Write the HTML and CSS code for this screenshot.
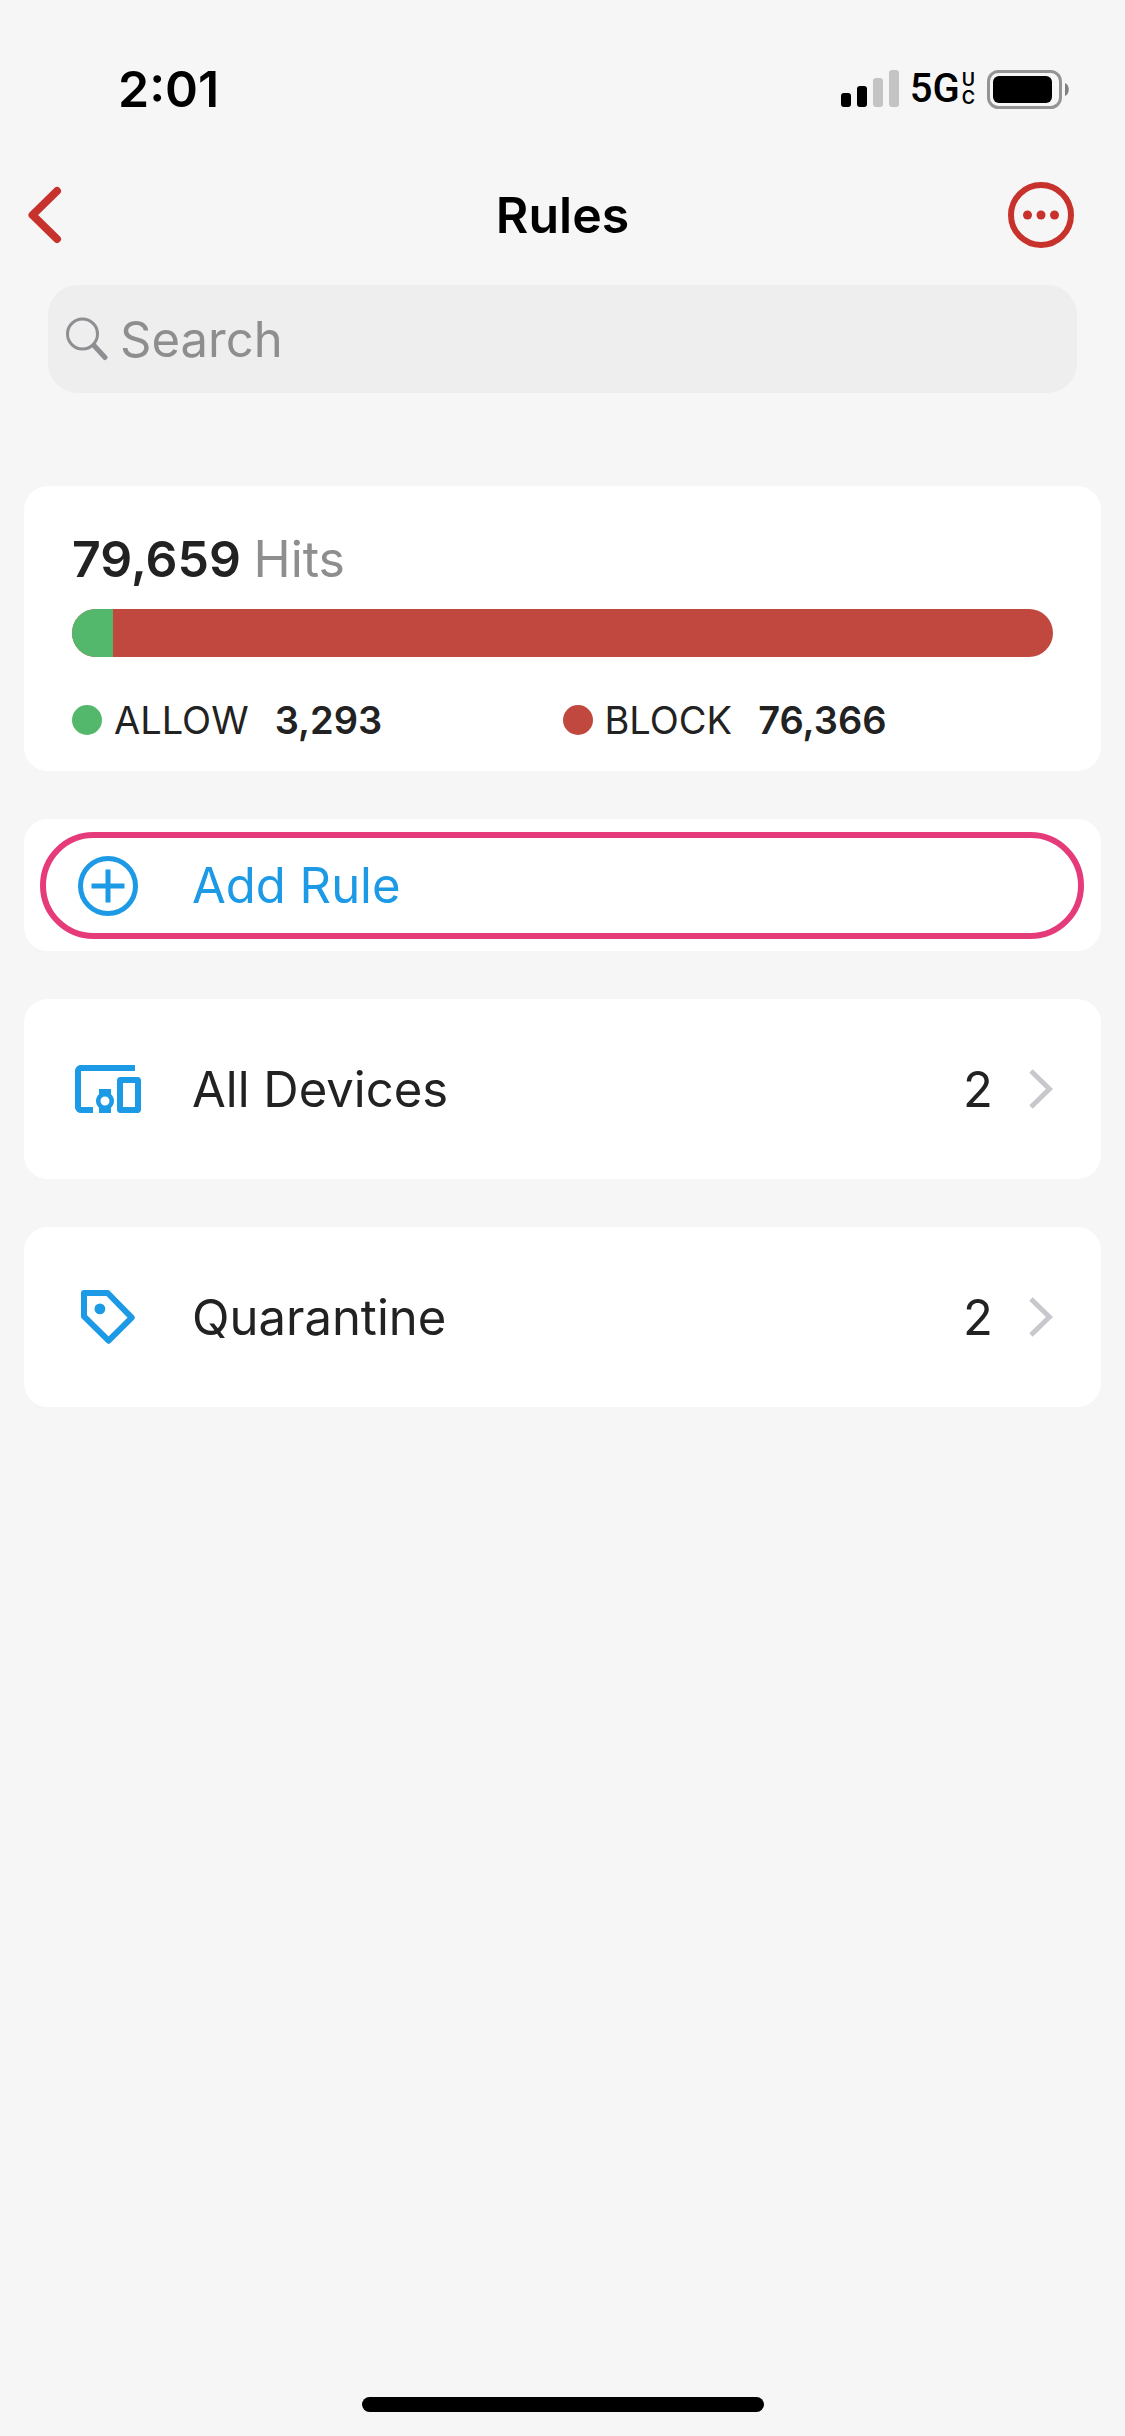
FILE: index.html
```html
<!DOCTYPE html>
<html lang="en">
<head>
  <meta charset="UTF-8">
  <meta name="viewport" content="width=device-width, initial-scale=1">
  <title>Rules</title>
  <link rel="stylesheet" href="styles.css">
</head>
<body>

<div class="status-bar">
  <span class="time">2:01</span>
  <div class="status-icons">
    <svg class="signal" viewBox="0 0 58 38" aria-hidden="true">
      <rect x="0" y="23" width="10" height="14" rx="3"/>
      <rect x="16" y="16" width="10" height="21" rx="3"/>
      <rect class="off" x="32" y="8" width="10" height="29" rx="3"/>
      <rect class="off" x="48" y="0" width="10" height="37" rx="3"/>
    </svg>
    <span class="network">5G</span>
    <span class="network-uc"><span>U</span><span>C</span></span>
    <svg class="battery" viewBox="0 0 82 39" aria-hidden="true">
      <rect class="shell" x="1.5" y="1.5" width="72" height="36" rx="10"/>
      <rect x="6" y="6" width="59" height="27" rx="6"/>
      <path class="nub" d="M78 13c5 2 5 11 0 13z"/>
    </svg>
  </div>
</div>

<header class="nav">
  <button class="back" aria-label="Back">
    <svg viewBox="0 0 34 58"><path d="M29 5L4.500 29L29 53"/></svg>
  </button>
  <h1>Rules</h1>
  <button class="more" aria-label="More">
    <svg viewBox="0 0 66 66">
      <circle class="ring" cx="33" cy="33" r="30"/>
      <circle cx="19.500" cy="33" r="4.500"/>
      <circle cx="33" cy="33" r="4.500"/>
      <circle cx="46.500" cy="33" r="4.500"/>
    </svg>
  </button>
</header>

<label class="search">
  <svg viewBox="0 0 42 44" aria-hidden="true">
    <circle cx="16.500" cy="17" r="15"/>
    <path d="M28 28.500L39 40.500"/>
  </svg>
  <input type="search" placeholder="Search" aria-label="Search">
</label>

<main>
  <section class="card summary">
    <h2>79,659 <span>Hits</span></h2>
    <div class="bar">
      <div class="bar-allow" style="width: 4.13%"></div>
    </div>
    <div class="legend">
      <div class="legend-item"><i class="dot allow"></i>ALLOW <strong>3,293</strong></div>
      <div class="legend-item"><i class="dot block"></i>BLOCK <strong>76,366</strong></div>
    </div>
  </section>

  <section class="card add-card">
    <button class="add-rule">
      <svg viewBox="0 0 60 60" aria-hidden="true">
        <circle cx="30" cy="30" r="27.500"/>
        <path d="M30 13.500v33M13.500 30h33"/>
      </svg>
      Add Rule
    </button>
  </section>

  <a class="card row" href="#devices">
    <svg class="row-icon" viewBox="0 0 24 24" aria-hidden="true">
      <path d="M3 6h18V4H3c-1.100 0-2 .9-2 2v12c0 1.100.9 2 2 2h4v-2H3V6zm10 6H9v1.780c-.61.55-1 1.330-1 2.220s.39 1.670 1 2.220V20h4v-1.780c.61-.55 1-1.340 1-2.220s-.39-1.670-1-2.220V12zm-2 5.500c-.83 0-1.500-.67-1.500-1.500s.67-1.500 1.500-1.500 1.500.67 1.500 1.500-.67 1.500-1.500 1.500zM22 8h-6c-.5 0-1 .5-1 1v10c0 .5.5 1 1 1h6c.5 0 1-.5 1-1V9c0-.5-.5-1-1-1zm-1 10h-4v-8h4v8z"/>
    </svg>
    <span class="row-label">All Devices</span>
    <span class="row-count">2</span>
    <svg class="chevron" viewBox="0 0 24 40" aria-hidden="true"><path d="M2 2L20.500 20L2 38"/></svg>
  </a>

  <a class="card row" href="#quarantine">
    <svg class="row-icon" viewBox="0 0 24 24" aria-hidden="true">
      <path class="tag" d="M4 4h7.900L19.900 12.200L12.200 19.900L4 11.800z"/>
      <circle cx="9.300" cy="9.300" r="1.800"/>
    </svg>
    <span class="row-label">Quarantine</span>
    <span class="row-count">2</span>
    <svg class="chevron" viewBox="0 0 24 40" aria-hidden="true"><path d="M2 2L20.500 20L2 38"/></svg>
  </a>
</main>

<div class="home-indicator"></div>

</body>
</html>
```

FILE: styles.css
```css
* {
  box-sizing: border-box;
}
body {
  margin: 0;
  min-height: 100vh;
  display: flex;
  flex-direction: column;
  font-family: Inter, "Liberation Sans", sans-serif;
  font-size: 49px;
  line-height: 60px;
  color: #222;
  background: #f6f6f6;
}
h1, h2 {
  margin: 0;
  font-size: 50px;
  font-weight: 600;
}
button {
  padding: 0;
  border: none;
  background: none;
  font: inherit;
  cursor: pointer;
}
svg {
  display: block;
  flex: none;
}

/* status bar */
.status-bar {
  display: flex;
  justify-content: space-between;
  align-items: center;
  padding: 59px 56px 0 118px;
  color: #000;
}
.time {
  font-size: 50px;
  font-weight: 600;
}
.status-icons {
  display: flex;
  align-items: center;
}
.signal {
  width: 58px;
  height: 38px;
}
.signal .off {
  fill: #c4c4c4;
}
.network {
  margin-left: 11px;
  font-family: Roboto, sans-serif;
  font-size: 40px;
  font-weight: 500;
}
.network-uc {
  display: flex;
  flex-direction: column;
  margin: 0 12px 0 2px;
  font-size: 18px;
  line-height: 18px;
  font-weight: 600;
}
.battery {
  width: 82px;
  height: 39px;
}
.battery .shell {
  fill: none;
  stroke: #949494;
  stroke-width: 3;
}
.battery .nub {
  fill: #808080;
}

/* navigation */
.nav {
  display: grid;
  grid-template-columns: 1fr auto 1fr;
  column-gap: 20px;
  align-items: center;
  height: 132px;
  padding: 0 28px;
  margin-top: 30px;
}
.nav h1 {
  color: #000;
}
.back {
  justify-self: start;
}
.more {
  justify-self: end;
  margin-right: 23px;
}
.back svg {
  width: 34px;
  height: 58px;
  fill: none;
  stroke: #c8322d;
  stroke-width: 8;
  stroke-linecap: round;
  stroke-linejoin: round;
}
.more svg {
  width: 66px;
  height: 66px;
  fill: #c8322d;
}
.more .ring {
  fill: none;
  stroke: #c8322d;
  stroke-width: 6;
}

/* search */
.search {
  display: flex;
  align-items: center;
  gap: 12px;
  height: 108px;
  margin: 4px 48px 0;
  padding: 0 18px;
  border-radius: 30px;
  background: #eee;
}
.search svg {
  width: 42px;
  height: 44px;
  fill: none;
  stroke: #8e8e93;
  stroke-width: 3;
  stroke-linecap: round;
}
.search path {
  stroke-width: 5;
}
.search input {
  flex: 1;
  min-width: 0;
  padding: 2px 0 0;
  border: none;
  outline: none;
  background: none;
  font: inherit;
  color: #222;
}
.search input::placeholder {
  color: #8e8e8e;
}

/* cards */
main {
  display: flex;
  flex-direction: column;
  gap: 48px;
  padding: 93px 24px 48px;
}
.card {
  border-radius: 24px;
  background: #fff;
}
.summary {
  padding: 43px 48px 21px;
}
.summary h2 span {
  font-weight: 400;
  color: #8e8e8e;
}
.bar {
  height: 48px;
  margin-top: 20px;
  border-radius: 24px;
  overflow: hidden;
  background: #c1483f;
}
.bar-allow {
  height: 100%;
  background: #53b86c;
}
.legend {
  display: grid;
  grid-template-columns: 1fr 1fr;
  margin-top: 33px;
  font-size: 38px;
}
.legend-item {
  display: flex;
  align-items: center;
}
.legend strong {
  margin-left: 26px;
  font-weight: 600;
}
.dot {
  width: 30px;
  height: 30px;
  margin-right: 12px;
  border-radius: 50%;
}
.dot.allow {
  background: #53b86c;
}
.dot.block {
  background: #c1483f;
}

.add-card {
  padding: 13px 17px 12px 16px;
}
.add-rule {
  display: flex;
  align-items: center;
  gap: 54px;
  width: 100%;
  height: 107px;
  padding: 0 32px;
  border: 6px solid #e63b7a;
  border-radius: 54px;
  color: #1c9ae6;
}
.add-rule svg {
  width: 60px;
  height: 60px;
  fill: none;
  stroke: #1c9ae6;
  stroke-width: 5;
}

.row {
  display: flex;
  align-items: center;
  height: 180px;
  padding: 0 48px;
  color: #222;
  text-decoration: none;
}
.row-icon {
  width: 72px;
  height: 72px;
  fill: #1c9ae6;
}
.tag {
  fill: none;
  stroke: #1c9ae6;
  stroke-width: 2;
  stroke-linejoin: round;
}
.row-label {
  flex: 1;
  margin-left: 48px;
  padding-top: 2px;
}
.row-count {
  margin-right: 36px;
  padding-top: 2px;
}
.chevron {
  width: 24px;
  height: 40px;
  fill: none;
  stroke: #c7c7cc;
  stroke-width: 5;
}

.home-indicator {
  width: 402px;
  height: 15px;
  margin: auto auto 24px;
  border-radius: 8px;
  background: #000;
}
```
